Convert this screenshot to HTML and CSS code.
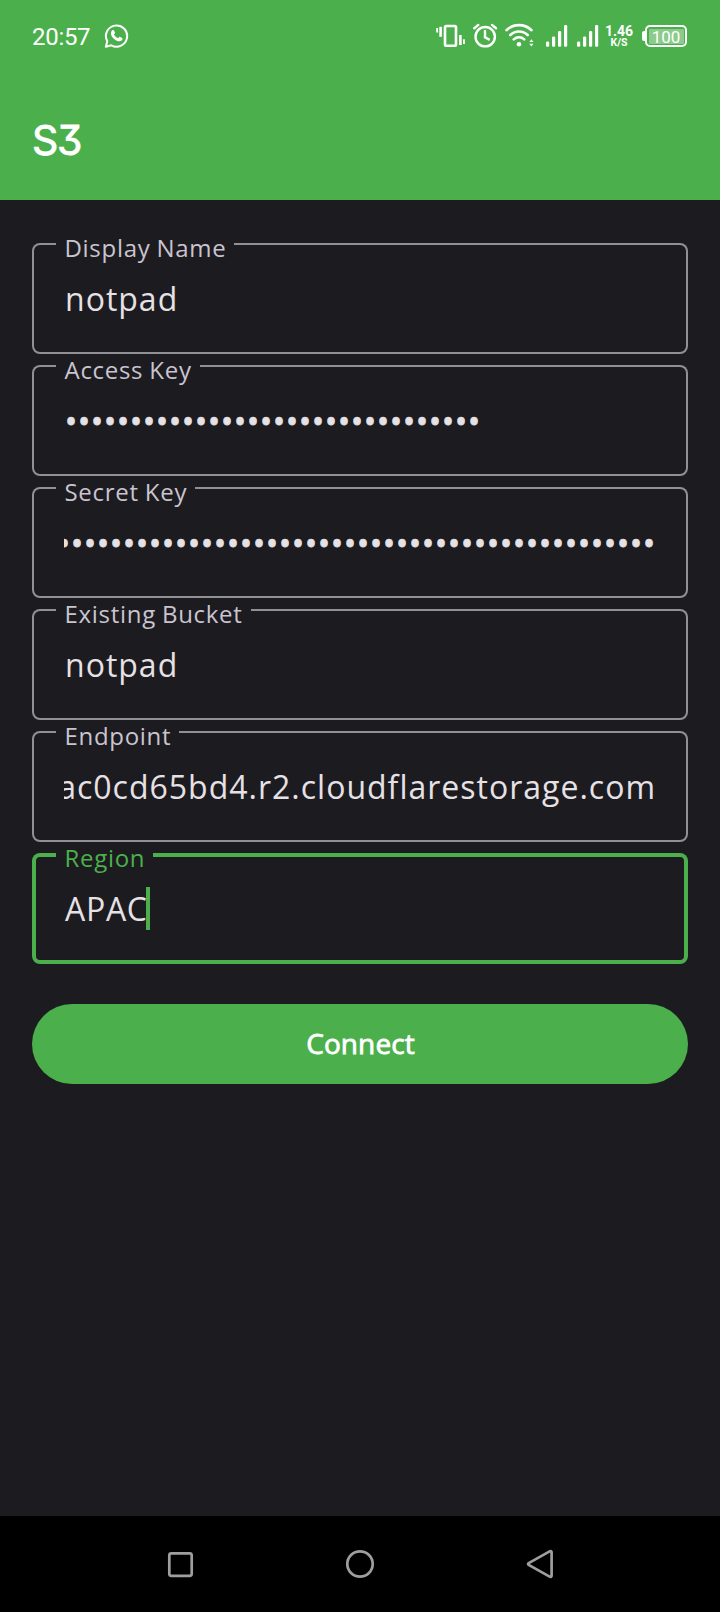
FILE: index.html
```html
<!DOCTYPE html>
<html lang="en">
<head>
<meta charset="utf-8">
<title>S3</title>
<link rel="stylesheet" href="styles.css">
</head>
<body>
<header class="header">
  <div class="status">
    <span class="clock">20:57</span>
    <svg class="whatsapp" width="26" height="26" viewBox="103 23 26 26" fill="none" stroke="#fff">
      <path d="M105.900 46.800 L107.300 41.300 A10.600 10.600 0 1 1 111.300 45.300 Z" stroke-width="2" stroke-linejoin="round"/>
      <path d="M112.300 30.300c.7-.6 1.500-.4 1.800.3l.8 1.900c.2.500.1.900-.3 1.300l-.6.7c.9 1.800 2.300 3 4.100 3.800l.9-1.100c.3-.4.8-.4 1.200-.2l1.900 1c.5.300.6.700.4 1.300-.5 1.500-2.200 2.200-3.800 1.900-3.900-.8-7.200-4-7.700-7.300-.2-1.400.3-2.800 1.300-3.600z" fill="#fff" stroke="none"/>
    </svg>
    <div class="status-icons">
      <svg width="30" height="26" viewBox="436 23 30 26" fill="#fff">
        <rect x="445" y="26" width="11" height="19.700" rx="1.200" fill="none" stroke="#fff" stroke-width="2.600"/>
        <rect x="436.200" y="28" width="1.900" height="4.500"/>
        <rect x="439.300" y="26.800" width="2.600" height="10"/>
        <rect x="459.100" y="35" width="2.600" height="10"/>
        <rect x="463" y="39.300" width="1.900" height="4.700"/>
      </svg>
      <svg class="alarm" width="25" height="26" viewBox="473 23 25 26" fill="none" stroke="#fff" stroke-width="2.400" stroke-linecap="round">
        <circle cx="485.200" cy="36.700" r="9.700"/>
        <path d="M485 31v6.200l3.800 2.200M474.300 28.200l4-3.300M496 28.200l-4-3.300"/>
      </svg>
      <svg class="wifi" width="30" height="26" viewBox="505 23 30 26" fill="none" stroke="#fff" stroke-width="2.600" stroke-linecap="round">
        <path d="M506.500 30.200a18 18 0 0 1 25 0M510.300 35a12.500 12.500 0 0 1 17.400 0M513.800 39.400a7.500 7.500 0 0 1 10.400 0"/>
        <circle cx="519" cy="44.300" r="2.300" fill="#fff" stroke="none"/>
        <path d="M529.300 42l2.100-2.700 2.100 2.700zM529.300 43.700l2.100 2.700 2.100-2.700z" fill="#fff" stroke="none"/>
      </svg>
      <svg class="signal" width="22" height="26" viewBox="546 23 22 26" fill="#fff">
        <rect x="546" y="41.500" width="3.200" height="5.200" rx="1.200"/><rect x="552" y="36.500" width="3.200" height="10.200" rx="1.200"/><rect x="558" y="31" width="3.200" height="15.700" rx="1.200"/><rect x="564" y="25" width="3.200" height="21.700" rx="1.200"/>
      </svg>
      <svg class="signal-second" width="22" height="26" viewBox="546 23 22 26" fill="#fff">
        <rect x="546" y="41.500" width="3.200" height="5.200" rx="1.200"/><rect x="552" y="36.500" width="3.200" height="10.200" rx="1.200"/><rect x="558" y="31" width="3.200" height="15.700" rx="1.200"/><rect x="564" y="25" width="3.200" height="21.700" rx="1.200"/>
      </svg>
      <div class="speed"><span>1.46</span><span class="unit">K/S</span></div>
      <div class="battery"><span class="nub"></span><span class="cell"><span class="charge">100</span></span></div>
    </div>
  </div>
  <h1 class="title">S3</h1>
</header>
<main class="form">
  <div class="field"><span class="label">Display Name</span><div class="value">notpad</div></div>
  <div class="field"><span class="label">Access Key</span><div class="value secret">••••••••••••••••••••••••••••••••</div></div>
  <div class="field"><span class="label">Secret Key</span><div class="value secret scrolled">••••••••••••••••••••••••••••••••••••••••••••••</div></div>
  <div class="field"><span class="label">Existing Bucket</span><div class="value">notpad</div></div>
  <div class="field"><span class="label">Endpoint</span><div class="value scrolled">ac0cd65bd4.r2.cloudflarestorage.com</div></div>
  <div class="field focused"><span class="label">Region</span><div class="value">APAC<span class="caret"></span></div></div>
  <button class="connect">Connect</button>
</main>
<nav class="nav">
  <svg width="30" height="30" viewBox="0 0 30 30"><rect x="4.300" y="4.400" width="22.400" height="22.400" rx="2"/></svg>
  <svg width="30" height="30" viewBox="0 0 30 30"><circle cx="15" cy="15" r="12.700"/></svg>
  <svg width="30" height="30" viewBox="0 0 30 30"><path d="M3.700 14.100 L24.600 2.400 Q26.600 1.500 26.600 3.600 V26.400 Q26.600 28.500 24.600 27.600 L3.700 15.900 Q2.400 15 3.700 14.100 Z"/></svg>
</nav>
</body>
</html>
```
FILE: styles.css
```css
* { box-sizing: border-box; }

body {
  margin: 0;
  width: 720px;
  height: 1612px;
  display: flex;
  flex-direction: column;
  background: #1c1b20;
  font-family: "Open Sans", "Noto Sans", sans-serif;
}

svg { display: block; flex: none; }

.header {
  height: 200px;
  background: #4bb04b;
  color: #fff;
}

.status {
  display: flex;
  align-items: center;
  height: 72px;
  padding: 0 33px 0 32px;
  font-family: Roboto, sans-serif;
}

.clock { width: 59px; font-size: 24px; line-height: 28px; padding-top: 2px; letter-spacing: -0.3px; }
.whatsapp { margin-left: 12px; }

.status-icons { display: flex; align-items: center; margin-left: auto; }
.alarm { margin-left: 7px; }
.wifi { margin-left: 7px; }
.signal { margin-left: 11px; }
.signal-second { margin-left: 9px; }

.speed {
  display: flex;
  flex-direction: column;
  align-items: center;
  width: 28px;
  margin-left: 6px;
  font-size: 14px;
  line-height: 13px;
  font-weight: 700;
}
.unit { font-size: 10.5px; line-height: 10px; }

.battery { display: flex; align-items: center; margin-left: 9px; }
.nub { width: 3px; height: 10px; background: #fff; border-radius: 2px 0 0 2px; }
.cell {
  width: 42px;
  height: 22px;
  padding: 1.5px;
  border: 2px solid #fff;
  border-radius: 5px;
}
.charge {
  display: block;
  height: 15px;
  background: #8ccb8c;
  border-radius: 1px;
  font-size: 17px;
  line-height: 16px;
  text-align: center;
}

.title {
  margin: 0;
  padding: 42px 0 0 32px;
  font-family: Inter, sans-serif;
  font-size: 41px;
  line-height: 52px;
  font-weight: 400;
  font-feature-settings: "cv09";
  letter-spacing: -1.4px;
  -webkit-text-stroke: 0.9px #fff;
}

.form {
  flex: 1;
  display: flex;
  flex-direction: column;
  gap: 11px;
  padding: 43px 32px 0;
}

.field {
  position: relative;
  height: 111px;
  padding: 34px 32px 0;
  border-radius: 8px;
  box-shadow: inset 0 0 0 2px #919096;
}

/* The label's backing only covers the field's own outline. */
.label {
  position: absolute;
  left: 24px;
  top: -11px;
  padding: 0 8px 0 8.5px;
  background: linear-gradient(#1c1b20, #1c1b20) 0 10px / 100% 20px no-repeat;
  color: #cac4d0;
  font-size: 24px;
  line-height: 32px;
  letter-spacing: 0.7px;
  word-spacing: -0.8px;
}

.value {
  display: flex;
  height: 44px;
  padding-left: 1px;
  overflow: hidden;
  color: #e6e1e5;
  font-size: 32px;
  line-height: 44px;
  letter-spacing: 1px;
  white-space: nowrap;
}
.secret { letter-spacing: 0.97px; -webkit-text-stroke: 0.9px #e6e1e5; }
.scrolled { justify-content: flex-end; padding-left: 0; }

.focused { box-shadow: inset 0 0 0 4px #4bb04b; }
.focused .label { color: #4bb04b; }
.focused .value { letter-spacing: 0.7px; }
.caret { width: 4px; height: 43px; margin-left: -2px; background: #4bb04b; }

.connect {
  height: 80px;
  margin-top: 29px;
  padding: 0 0 2px 1px;
  border: 0;
  border-radius: 40px;
  background: #4bb04b;
  color: #fff;
  font: 400 28px/40px "Open Sans", sans-serif;
  letter-spacing: 0.1px;
  -webkit-text-stroke: 0.8px #fff;
}

.nav {
  display: flex;
  align-items: center;
  justify-content: space-between;
  height: 96px;
  padding: 0 165px;
  background: #000;
}
.nav svg { fill: none; stroke: #9e9e9e; stroke-width: 2.700; }
```
